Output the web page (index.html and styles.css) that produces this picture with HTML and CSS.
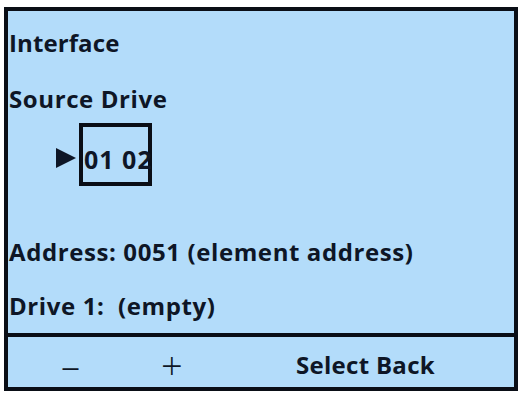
FILE: index.html
```html
<!DOCTYPE html>
<html>
<head>
<meta charset="utf-8">
<link rel="stylesheet" href="styles.css">
</head>
<body>
<div class="screen">
  <div class="main">
    <div class="line title">Interface</div>
    <div class="line heading">Source Drive</div>
    <div class="selector">
      <svg class="arrow" width="20" height="20" viewBox="0 0 20 20"><polygon points="0,0 20,10 0,20" fill="#0e1626"/></svg>
      <div class="box"><span class="drives">01 02</span></div>
    </div>
    <div class="line address">Address: 0051 (element address)</div>
    <div class="line drive">Drive 1:&nbsp; (empty)</div>
  </div>
  <div class="footer">
    <span class="key minus">–</span>
    <span class="key plus">+</span>
    <span class="key labels">Select Back</span>
  </div>
</div>
</body>
</html>
```
FILE: styles.css
```css
html, body {
  margin: 0;
  padding: 0;
  background: #ffffff;
}
body {
  width: 520px;
  height: 393px;
  overflow: hidden;
  font-family: "Open Sans", "Lato", sans-serif;
  color: #0e1626;
}
.screen {
  box-sizing: border-box;
  margin: 7px 2px 0 4px;
  width: 514px;
  height: 384px;
  border: 4px solid #0a0e16;
  background: #b3dcfa;
  display: flex;
  flex-direction: column;
}
.main {
  flex: 1;
  padding-left: 1px;
  display: flex;
  flex-direction: column;
}
.line {
  font-size: 24px;
  font-weight: 700;
  letter-spacing: 0.6px;
  line-height: 28px;
  height: 28px;
  white-space: nowrap;
}
.title { margin-top: 18px; letter-spacing: 0.1px; }
.heading { margin-top: 28px; }
.selector {
  margin-top: 10px;
  padding-left: 47px;
  display: flex;
  align-items: flex-end;
  gap: 3px;
}
.arrow {
  margin-bottom: 18px;
  display: block;
}
.box {
  box-sizing: border-box;
  width: 73px;
  height: 63px;
  border: 4px solid #0a0e16;
  padding: 18px 0 0 1px;
  overflow: visible;
}
.drives {
  font-size: 25px;
  font-weight: 700;
  letter-spacing: 1px;
  line-height: 28px;
  white-space: nowrap;
  display: block;
}
.address { margin-top: 52px; }
.drive { margin-top: 26px; }
.footer {
  box-sizing: border-box;
  height: 54px;
  border-top: 4px solid #0a0e16;
  display: flex;
  align-items: flex-start;
  padding-top: 13px;
}
.key {
  line-height: 30px;
  white-space: nowrap;
}
.minus, .plus {
  font-size: 38px;
  font-weight: 300;
}
.minus { margin-left: 53px; }
.plus { margin-left: 81px; }
.labels {
  margin-left: auto;
  margin-right: 79px;
  font-size: 24px;
  font-weight: 700;
  letter-spacing: 0.3px;
}
```
